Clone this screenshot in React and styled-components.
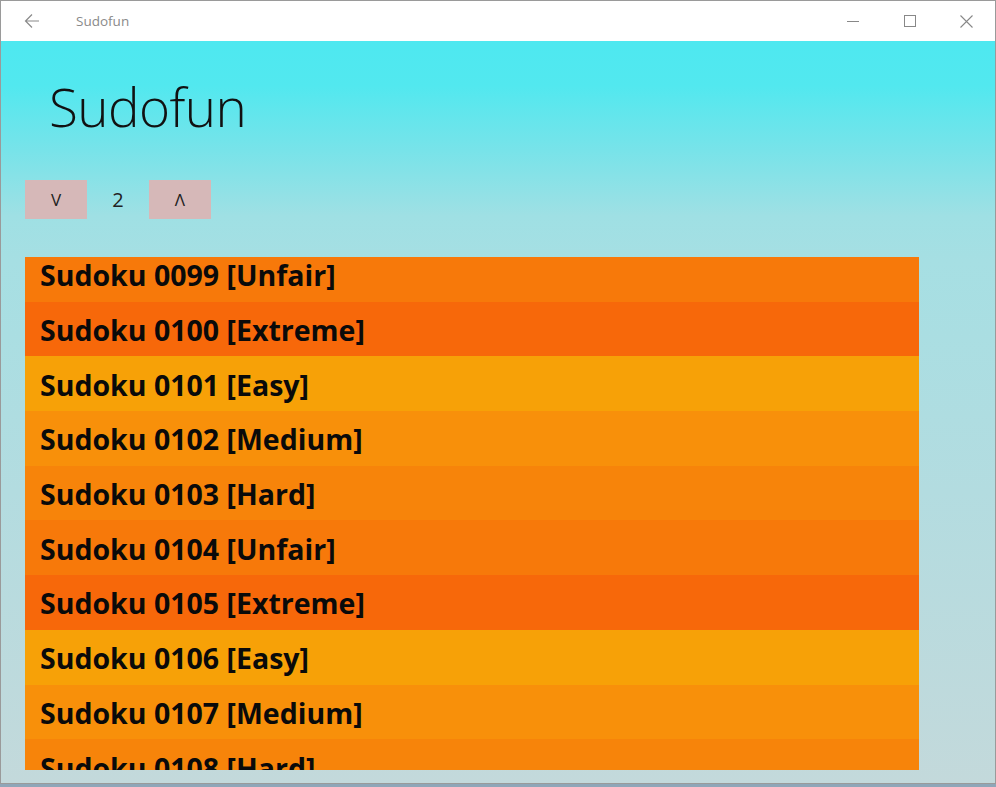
import React, { useLayoutEffect, useRef } from "react";
import styled, { createGlobalStyle } from "styled-components";

const Global = createGlobalStyle`
  html, body { margin: 0; padding: 0; }
  body {
    width: 996px;
    height: 787px;
    overflow: hidden;
    background: #8fa6b8;
    font-family: "Open Sans", "Noto Sans", sans-serif;
  }
`;

const Window = styled.div`
  width: 994px;
  height: 782px;
  border: 1px solid #9a9a9a;
  display: flex;
  flex-direction: column;
  background: #fff;
`;

const TitleBar = styled.div`
  height: 40px;
  flex: none;
  display: flex;
  align-items: center;
  background: #ffffff;
  color: #777;
`;

const BackButton = styled.div`
  width: 62px;
  height: 40px;
  display: flex;
  align-items: center;
  justify-content: center;
`;

const AppName = styled.div`
  margin-left: 13px;
  font-family: "Open Sans", sans-serif;
  font-size: 13.5px;
  color: #8a8a8a;
  flex: 1;
`;

const Controls = styled.div`
  display: flex;
  height: 40px;
`;

const ControlButton = styled.div`
  width: 57px;
  height: 40px;
  display: flex;
  align-items: center;
  justify-content: center;
`;

const Content = styled.div`
  flex: 1;
  display: flex;
  flex-direction: column;
  padding: 0 24px 13px;
  background: linear-gradient(
    to bottom,
    #4ee8f0 0px,
    #52e8ef 45px,
    #78e3e9 110px,
    #9fe0e4 175px,
    #a6dfe3 220px,
    #b3dce0 450px,
    #c3d9db 742px
  );
`;

const Heading = styled.h1`
  margin: 0;
  padding: 36px 0 0 24px;
  height: 105px;
  box-sizing: border-box;
  font-family: "Open Sans", sans-serif;
  font-weight: 300;
  font-size: 53px;
  line-height: 60px;
  color: #111;
  letter-spacing: -0.6px;
`;

const Pager = styled.div`
  display: flex;
  align-items: center;
  height: 39px;
  margin-top: 34px;
`;

const PagerButton = styled.div`
  width: 62px;
  height: 39px;
  background: #d6b8b8;
  display: flex;
  align-items: center;
  justify-content: center;
  font-family: "Open Sans", sans-serif;
  font-size: 17px;
  color: #222;
`;

const PageNumber = styled.div`
  width: 62px;
  text-align: center;
  font-family: "Open Sans", sans-serif;
  font-size: 20px;
  color: #222;
`;

const List = styled.div`
  margin-top: 38px;
  width: 894px;
  height: 513px;
  overflow: hidden;
`;

const colors = {
  Unfair: "#f7790a",
  Extreme: "#f7680a",
  Easy: "#f7a107",
  Medium: "#f8900a",
  Hard: "#f7840a",
};

const Row = styled.div`
  height: 54.7px;
  box-sizing: border-box;
  display: flex;
  align-items: center;
  padding: 2px 0 0 15px;
  background: ${(p) => colors[p.$level]};
  font-family: "Open Sans", sans-serif;
  font-weight: 700;
  font-size: 28.5px;
  color: #0a0a0a;
  white-space: nowrap;
`;

const levels = ["Unfair", "Extreme", "Easy", "Medium", "Hard"];
const items = Array.from({ length: 12 }, (_, i) => {
  const n = 99 + i;
  return { id: n, level: levels[i % 5] };
});

export default function App() {
  const listRef = useRef(null);
  useLayoutEffect(() => {
    if (listRef.current) listRef.current.scrollTop = 10;
  }, []);
  return (
    <>
      <Global />
      <Window>
        <TitleBar>
          <BackButton>
            <svg width="16" height="16" viewBox="0 0 16 16" fill="none" stroke="#8a8a8a" strokeWidth="1.2">
              <path d="M15 8H1.5M8 1.5L1.5 8L8 14.5" />
            </svg>
          </BackButton>
          <AppName>Sudofun</AppName>
          <Controls>
            <ControlButton>
              <svg width="12" height="12" viewBox="0 0 12 12" stroke="#888" strokeWidth="1">
                <path d="M0 6.5H12" />
              </svg>
            </ControlButton>
            <ControlButton>
              <svg width="12" height="12" viewBox="0 0 12 12" fill="none" stroke="#888" strokeWidth="1">
                <rect x="0.5" y="0.5" width="11" height="11" />
              </svg>
            </ControlButton>
            <ControlButton>
              <svg width="13" height="13" viewBox="0 0 13 13" stroke="#888" strokeWidth="1.1">
                <path d="M0.5 0.5L12.5 12.5M12.5 0.5L0.5 12.5" />
              </svg>
            </ControlButton>
          </Controls>
        </TitleBar>
        <Content>
          <Heading>Sudofun</Heading>
          <Pager>
            <PagerButton>V</PagerButton>
            <PageNumber>2</PageNumber>
            <PagerButton>Λ</PagerButton>
          </Pager>
          <List ref={listRef}>
            {items.map((it) => (
              <Row key={it.id} $level={it.level}>
                Sudoku {String(it.id).padStart(4, "0")} [{it.level}]
              </Row>
            ))}
          </List>
        </Content>
      </Window>
    </>
  );
}
